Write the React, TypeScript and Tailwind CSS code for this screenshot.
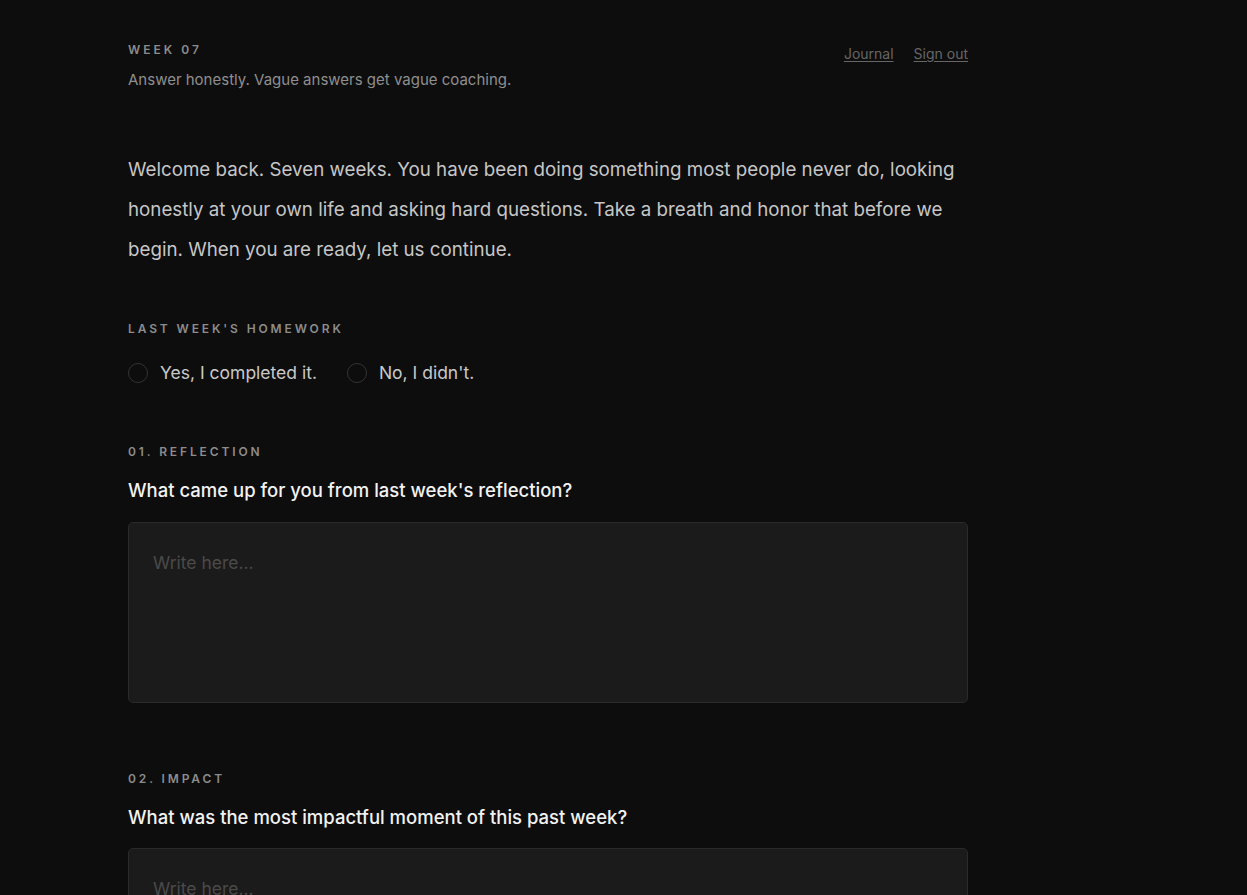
import { useState } from "react";

const questions = [
  { id: "01", tag: "Reflection", text: "What came up for you from last week's reflection?" },
  { id: "02", tag: "Impact", text: "What was the most impactful moment of this past week?" },
];

function Radio({ label, checked, onClick }: { label: string; checked: boolean; onClick: () => void }) {
  return (
    <button onClick={onClick} className="flex items-center gap-3 text-[17.5px] text-[#c9c9c9]">
      <span className="w-5 h-5 rounded-full border border-[#333] flex items-center justify-center">
        {checked && <span className="w-2.5 h-2.5 rounded-full bg-[#c9c9c9]" />}
      </span>
      {label}
    </button>
  );
}

export default function App() {
  const [done, setDone] = useState<string | null>(null);

  return (
    <div className="min-h-screen bg-[#0d0d0d] font-['Inter',sans-serif] antialiased">
      <div className="max-w-[840px] ml-32 pt-[41px] pb-16">

        <header className="flex justify-between items-start">
          <div>
            <p className="text-[12px] font-semibold tracking-[0.25em] text-[#8c8c8c]">WEEK 07</p>
            <p className="mt-[10px] text-[15px] text-[#8f8f8f]">Answer honestly. Vague answers get vague coaching.</p>
          </div>
          <nav className="flex gap-5 pt-[2px] text-[14px] text-[#666]">
            <a href="#" className="underline underline-offset-2">Journal</a>
            <a href="#" className="underline underline-offset-2">Sign out</a>
          </nav>
        </header>

        <p className="mt-[58px] text-[18.75px] leading-[40px] text-[#c6c6c6]">
          Welcome back. Seven weeks. You have been doing something most people never do, looking honestly at your own life and asking hard questions. Take a breath and honor that before we begin. When you are ready, let us continue.
        </p>

        <section className="mt-[50px]">
          <p className="text-[12px] font-semibold tracking-[0.24em] text-[#8c8c8c]">LAST WEEK'S HOMEWORK</p>
          <div className="mt-[22px] flex gap-[30px]">
            <Radio label="Yes, I completed it." checked={done === "yes"} onClick={() => setDone("yes")} />
            <Radio label="No, I didn't." checked={done === "no"} onClick={() => setDone("no")} />
          </div>
        </section>

        {questions.map((q, i) => (
          <section key={q.id} className={i === 0 ? "mt-[57px]" : "mt-[67px]"}>
            <p className="text-[12px] font-semibold tracking-[0.24em] text-[#8c8c8c] uppercase">
              {q.id}. {q.tag}
            </p>
            <p className="mt-[16px] text-[18.5px] font-medium text-[#f2f2f2]">{q.text}</p>
            <textarea
              placeholder="Write here..."
              className="mt-[17px] block w-full h-[181px] resize-none rounded-[5px] border border-[#2a2a2a] bg-[#1b1b1b] px-6 py-[27px] text-[17.5px] text-[#ddd] placeholder:text-[#4a4a4a] outline-none"
            />
          </section>
        ))}
      </div>
    </div>
  );
}
